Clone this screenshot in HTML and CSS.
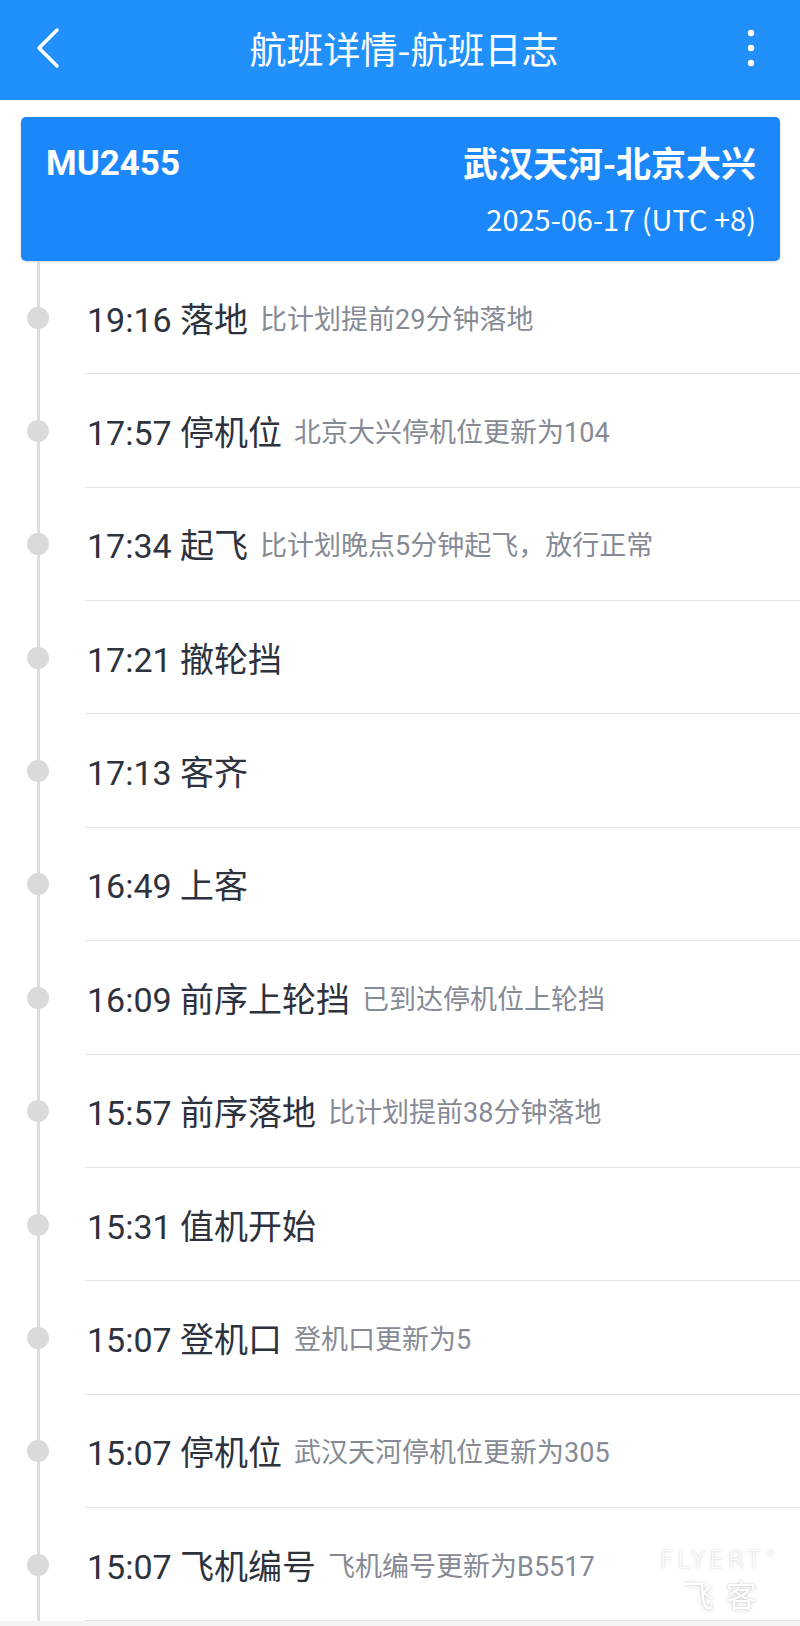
FILE: index.html
```html
<!DOCTYPE html>
<html lang="zh-CN">
  <head>
    <meta charset="UTF-8" />
    <meta name="viewport" content="width=device-width, initial-scale=1.0" />
    <title>航班详情-航班日志</title>
    <link rel="stylesheet" href="styles.css">
  </head>
  <body>
    <header class="topbar">
      <svg class="back" width="30" height="48" viewBox="0 0 30 48">
        <polyline points="24,6 6,24 24,42" fill="none" stroke="#fff" stroke-width="3.5" stroke-linecap="round" stroke-linejoin="round" />
      </svg>
      <h1>航班详情-航班日志</h1>
      <svg class="more" width="12" height="40" viewBox="0 0 12 40">
        <circle cx="6" cy="5" r="3.2" fill="#fff" />
        <circle cx="6" cy="20" r="3.2" fill="#fff" />
        <circle cx="6" cy="35" r="3.2" fill="#fff" />
      </svg>
    </header>

    <section class="flight-card">
      <div class="card-row">
        <span class="flight-no">MU2455</span>
        <span class="route">武汉天河-北京大兴</span>
      </div>
      <div class="date">2025-06-17 (UTC +8)</div>
    </section>

    <ul class="log">
      <li class="item">
        <div class="rail"><span class="dot"></span></div>
        <div class="content"><span class="event">19:16 落地</span><span class="note">比计划提前29分钟落地</span></div>
      </li>
      <li class="item">
        <div class="rail"><span class="dot"></span></div>
        <div class="content"><span class="event">17:57 停机位</span><span class="note">北京大兴停机位更新为104</span></div>
      </li>
      <li class="item">
        <div class="rail"><span class="dot"></span></div>
        <div class="content"><span class="event">17:34 起飞</span><span class="note">比计划晚点5分钟起飞，放行正常</span></div>
      </li>
      <li class="item">
        <div class="rail"><span class="dot"></span></div>
        <div class="content"><span class="event">17:21 撤轮挡</span></div>
      </li>
      <li class="item">
        <div class="rail"><span class="dot"></span></div>
        <div class="content"><span class="event">17:13 客齐</span></div>
      </li>
      <li class="item">
        <div class="rail"><span class="dot"></span></div>
        <div class="content"><span class="event">16:49 上客</span></div>
      </li>
      <li class="item">
        <div class="rail"><span class="dot"></span></div>
        <div class="content"><span class="event">16:09 前序上轮挡</span><span class="note">已到达停机位上轮挡</span></div>
      </li>
      <li class="item">
        <div class="rail"><span class="dot"></span></div>
        <div class="content"><span class="event">15:57 前序落地</span><span class="note">比计划提前38分钟落地</span></div>
      </li>
      <li class="item">
        <div class="rail"><span class="dot"></span></div>
        <div class="content"><span class="event">15:31 值机开始</span></div>
      </li>
      <li class="item">
        <div class="rail"><span class="dot"></span></div>
        <div class="content"><span class="event">15:07 登机口</span><span class="note">登机口更新为5</span></div>
      </li>
      <li class="item">
        <div class="rail"><span class="dot"></span></div>
        <div class="content"><span class="event">15:07 停机位</span><span class="note">武汉天河停机位更新为305</span></div>
      </li>
      <li class="item">
        <div class="rail"><span class="dot"></span></div>
        <div class="content"><span class="event">15:07 飞机编号</span><span class="note">飞机编号更新为B5517</span></div>
      </li>
    </ul>

    <div class="watermark">
      <span class="wm-en">FLYERT<sup>+</sup></span>
      <span class="wm-cn">飞客</span>
    </div>
  </body>
</html>
```

FILE: styles.css
```css
html {
  background-color: #f3f4f6;
}
body {
  font-family: "Noto Sans CJK SC", "Noto Sans", sans-serif;
  background-color: #fff;
  margin: 0;
  width: 800px;
  position: relative;
}
.topbar {
  height: 100px;
  background-color: #2290fb;
  display: flex;
  align-items: center;
  justify-content: space-between;
  padding: 0 43px 4px 33px;
  box-sizing: border-box;
}
.topbar h1 {
  margin: 0;
  color: #fff;
  font-size: 37px;
  font-weight: 400;
  line-height: 1;
}
.back {
  display: block;
}
.more {
  display: block;
}
.flight-card {
  margin: 17px 20px 0 21px;
  height: 144px;
  box-sizing: border-box;
  padding: 21px 24px 22px 25px;
  background-color: #1b87f9;
  border-radius: 5px;
  box-shadow: 0 1px 3px rgba(0, 0, 0, 0.15);
  color: #fff;
}
.card-row {
  display: flex;
  justify-content: space-between;
  align-items: center;
  height: 46px;
}
.flight-no {
  font-family: Roboto, "Noto Sans CJK SC", sans-serif;
  font-size: 35px;
  font-weight: 700;
  margin-top: 4px;
}
.route {
  font-size: 35px;
  font-weight: 700;
}
.date {
  margin-top: 14px;
  height: 40px;
  line-height: 40px;
  text-align: right;
  font-size: 29px;
}
.log {
  list-style: none;
  margin: 0;
  padding: 0;
  font-family: Roboto, "Noto Sans CJK SC", sans-serif;
}
.item {
  display: flex;
}
.rail {
  width: 85px;
  flex-shrink: 0;
  display: flex;
  align-items: center;
  background: linear-gradient(#dcdde1, #dcdde1) 37px 0 / 3px 100% no-repeat;
}
.dot {
  width: 22px;
  height: 22px;
  border-radius: 50%;
  background-color: #d9dade;
  margin-left: 27px;
}
.content {
  flex: 1;
  height: 112.36px;
  border-bottom: 1px solid #e3e4e8;
  display: flex;
  align-items: center;
  padding-left: 2px;
  white-space: nowrap;
}
.event {
  font-size: 34px;
  color: #2d323d;
}
.note {
  margin-left: 12px;
  font-size: 27px;
  color: #868a94;
}
.watermark {
  position: absolute;
  right: 20px;
  bottom: 12px;
  display: flex;
  flex-direction: column;
  align-items: center;
  color: #fff;
  text-shadow: 0 0 2px rgba(0, 0, 0, 0.2), 0 1px 5px rgba(0, 0, 0, 0.12);
  line-height: 1;
}
.wm-en {
  font-family: "DejaVu Sans", sans-serif;
  font-size: 25px;
  font-weight: 200;
  letter-spacing: 3px;
}
.wm-en sup {
  font-size: 15px;
  vertical-align: 10px;
}
.wm-cn {
  margin-top: 6px;
  font-size: 31px;
  letter-spacing: 12px;
  margin-right: -12px;
}
```
